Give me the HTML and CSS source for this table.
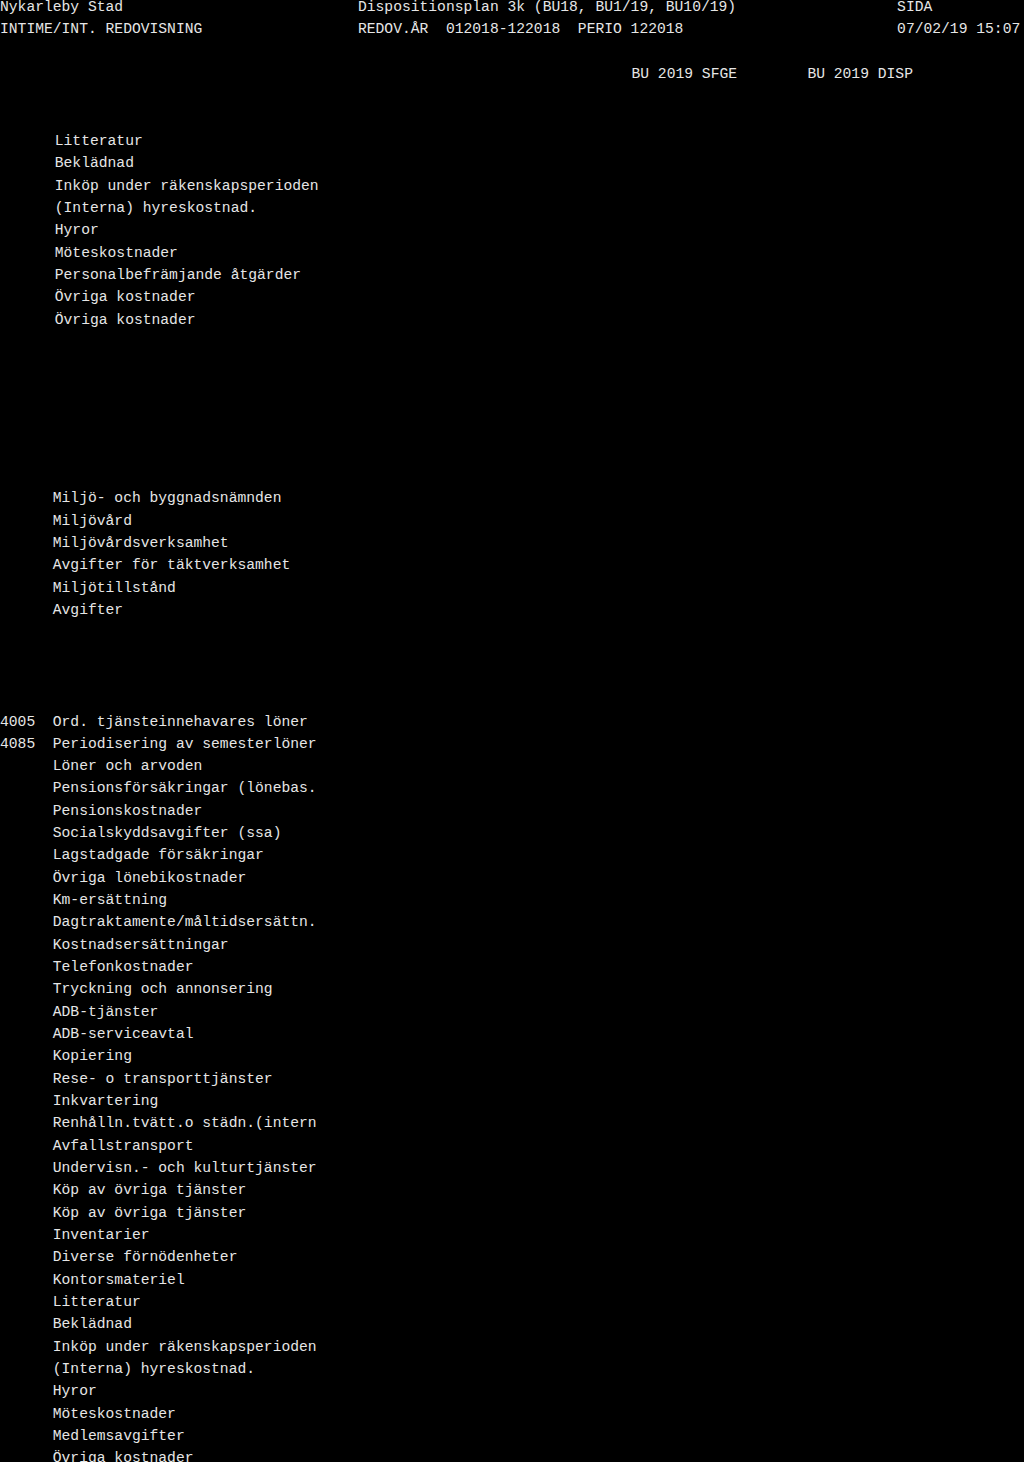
FILE: index.html
```html
<!DOCTYPE html>
<html lang="sv">
<head>
<meta charset="utf-8">
<title>Dispositionsplan 3k</title>
<link rel="stylesheet" href="styles.css">
</head>
<body>
<div class="page">
  <header class="report-head">
    <div class="head-row">
      <span>Nykarleby Stad</span>
      <span>Dispositionsplan 3k (BU18, BU1/19, BU10/19)</span>
      <span>SIDA</span>
    </div>
    <div class="head-row">
      <span>INTIME/INT. REDOVISNING</span>
      <span>REDOV.ÅR  012018-122018  PERIO 122018</span>
      <span>07/02/19 15:07</span>
    </div>
    <div class="col-heads">
      <span class="col-sfge">BU 2019 SFGE</span>
      <span class="col-disp">BU 2019 DISP</span>
    </div>
  </header>

  <section class="block block-a">
    <div class="row"><span class="code"></span><span class="desc">Litteratur</span></div>
    <div class="row"><span class="code"></span><span class="desc">Beklädnad</span></div>
    <div class="row"><span class="code"></span><span class="desc">Inköp under räkenskapsperioden</span></div>
    <div class="row"><span class="code"></span><span class="desc">(Interna) hyreskostnad.</span></div>
    <div class="row"><span class="code"></span><span class="desc">Hyror</span></div>
    <div class="row"><span class="code"></span><span class="desc">Möteskostnader</span></div>
    <div class="row"><span class="code"></span><span class="desc">Personalbefrämjande åtgärder</span></div>
    <div class="row"><span class="code"></span><span class="desc">Övriga kostnader</span></div>
    <div class="row"><span class="code"></span><span class="desc">Övriga kostnader</span></div>
  </section>

  <section class="block block-b">
    <div class="row"><span class="code"></span><span class="desc">Miljö- och byggnadsnämnden</span></div>
    <div class="row"><span class="code"></span><span class="desc">Miljövård</span></div>
    <div class="row"><span class="code"></span><span class="desc">Miljövårdsverksamhet</span></div>
    <div class="row"><span class="code"></span><span class="desc">Avgifter för täktverksamhet</span></div>
    <div class="row"><span class="code"></span><span class="desc">Miljötillstånd</span></div>
    <div class="row"><span class="code"></span><span class="desc">Avgifter</span></div>
  </section>

  <section class="block block-c">
    <div class="row"><span class="code">4005</span><span class="desc">Ord. tjänsteinnehavares löner</span></div>
    <div class="row"><span class="code">4085</span><span class="desc">Periodisering av semesterlöner</span></div>
    <div class="row"><span class="code"></span><span class="desc">Löner och arvoden</span></div>
    <div class="row"><span class="code"></span><span class="desc">Pensionsförsäkringar (lönebas.</span></div>
    <div class="row"><span class="code"></span><span class="desc">Pensionskostnader</span></div>
    <div class="row"><span class="code"></span><span class="desc">Socialskyddsavgifter (ssa)</span></div>
    <div class="row"><span class="code"></span><span class="desc">Lagstadgade försäkringar</span></div>
    <div class="row"><span class="code"></span><span class="desc">Övriga lönebikostnader</span></div>
    <div class="row"><span class="code"></span><span class="desc">Km-ersättning</span></div>
    <div class="row"><span class="code"></span><span class="desc">Dagtraktamente/måltidsersättn.</span></div>
    <div class="row"><span class="code"></span><span class="desc">Kostnadsersättningar</span></div>
    <div class="row"><span class="code"></span><span class="desc">Telefonkostnader</span></div>
    <div class="row"><span class="code"></span><span class="desc">Tryckning och annonsering</span></div>
    <div class="row"><span class="code"></span><span class="desc">ADB-tjänster</span></div>
    <div class="row"><span class="code"></span><span class="desc">ADB-serviceavtal</span></div>
    <div class="row"><span class="code"></span><span class="desc">Kopiering</span></div>
    <div class="row"><span class="code"></span><span class="desc">Rese- o transporttjänster</span></div>
    <div class="row"><span class="code"></span><span class="desc">Inkvartering</span></div>
    <div class="row"><span class="code"></span><span class="desc">Renhålln.tvätt.o städn.(intern</span></div>
    <div class="row"><span class="code"></span><span class="desc">Avfallstransport</span></div>
    <div class="row"><span class="code"></span><span class="desc">Undervisn.- och kulturtjänster</span></div>
    <div class="row"><span class="code"></span><span class="desc">Köp av övriga tjänster</span></div>
    <div class="row"><span class="code"></span><span class="desc">Köp av övriga tjänster</span></div>
    <div class="row"><span class="code"></span><span class="desc">Inventarier</span></div>
    <div class="row"><span class="code"></span><span class="desc">Diverse förnödenheter</span></div>
    <div class="row"><span class="code"></span><span class="desc">Kontorsmateriel</span></div>
    <div class="row"><span class="code"></span><span class="desc">Litteratur</span></div>
    <div class="row"><span class="code"></span><span class="desc">Beklädnad</span></div>
    <div class="row"><span class="code"></span><span class="desc">Inköp under räkenskapsperioden</span></div>
    <div class="row"><span class="code"></span><span class="desc">(Interna) hyreskostnad.</span></div>
    <div class="row"><span class="code"></span><span class="desc">Hyror</span></div>
    <div class="row"><span class="code"></span><span class="desc">Möteskostnader</span></div>
    <div class="row"><span class="code"></span><span class="desc">Medlemsavgifter</span></div>
    <div class="row"><span class="code"></span><span class="desc">Övriga kostnader</span></div>
  </section>
</div>
</body>
</html>
```

FILE: styles.css
```css
:root {
  --lh: 22.33px;
}

html, body {
  margin: 0;
  padding: 0;
  background: #000;
}

body {
  color: #e6e6e6;
  font-family: "Liberation Mono", "Courier New", monospace;
  font-size: 14.67px;
  line-height: var(--lh);
  overflow: hidden;
}

.page {
  margin-top: -4px;
  display: flex;
  flex-direction: column;
}

.report-head {
  display: flex;
  flex-direction: column;
}

.head-row {
  display: grid;
  grid-template-columns: 40.7ch 61.3ch auto;
  white-space: pre;
  height: var(--lh);
}

.col-heads {
  display: flex;
  gap: 8ch;
  padding-left: 71.8ch;
  margin-top: var(--lh);
  white-space: pre;
  height: var(--lh);
}

.block {
  display: flex;
  flex-direction: column;
}

.block-a {
  margin-top: calc(var(--lh) * 2);
  padding-left: 2px;
}

.block-b {
  margin-top: calc(var(--lh) * 7);
}

.block-c {
  margin-top: calc(var(--lh) * 4);
}

.row {
  display: flex;
  height: var(--lh);
  white-space: pre;
}

.code {
  width: 6ch;
  flex: none;
}

.desc {
  flex: 1;
}
```
